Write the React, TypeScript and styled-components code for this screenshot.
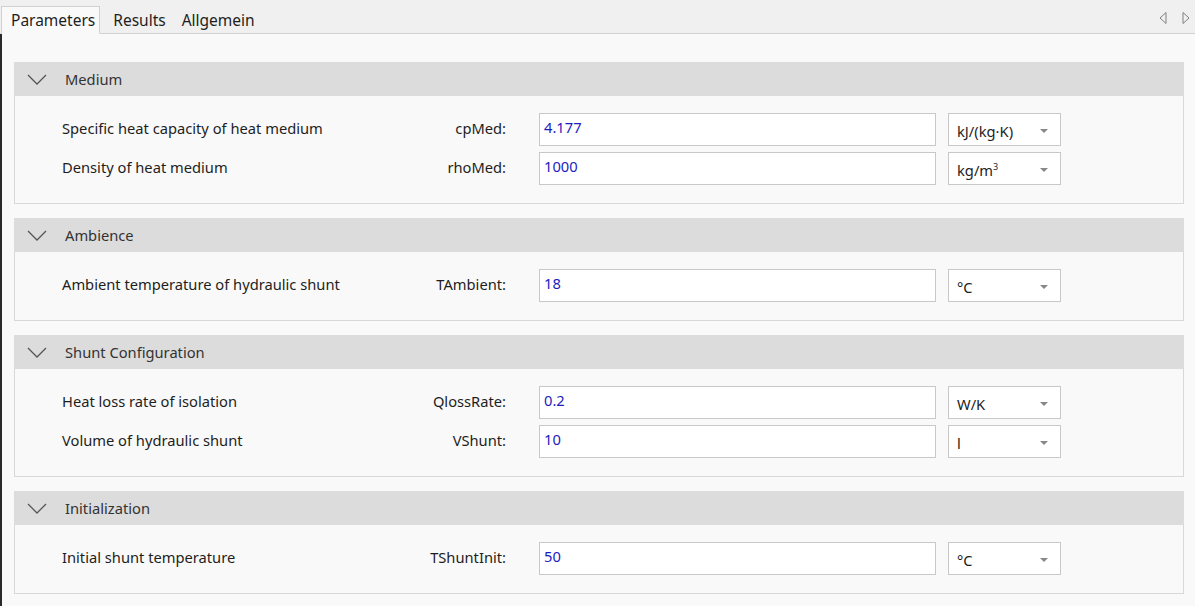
import styled, { createGlobalStyle } from "styled-components";
import { ReactElement } from "react";

interface ParamRow {
    label: string;
    name: string;
    value: string;
    unit: ReactElement | string;
}

interface SectionData {
    title: string;
    rows: ParamRow[];
}

const sections: SectionData[] = [
    {
        title: "Medium",
        rows: [
            { label: "Specific heat capacity of heat medium", name: "cpMed:", value: "4.177", unit: "kJ/(kg·K)" },
            { label: "Density of heat medium", name: "rhoMed:", value: "1000", unit: <>kg/m<sup>3</sup></> },
        ],
    },
    {
        title: "Ambience",
        rows: [
            { label: "Ambient temperature of hydraulic shunt", name: "TAmbient:", value: "18", unit: "°C" },
        ],
    },
    {
        title: "Shunt Configuration",
        rows: [
            { label: "Heat loss rate of isolation", name: "QlossRate:", value: "0.2", unit: "W/K" },
            { label: "Volume of hydraulic shunt", name: "VShunt:", value: "10", unit: "l" },
        ],
    },
    {
        title: "Initialization",
        rows: [
            { label: "Initial shunt temperature", name: "TShuntInit:", value: "50", unit: "°C" },
        ],
    },
];

export default function App(): JSX.Element {
    return (
        <>
            <GlobalStyle />
            <Window>
                <TabBar>
                    <Tab active>Parameters</Tab>
                    <Tab>Results</Tab>
                    <Tab>Allgemein</Tab>
                    <TabSpacer />
                    <ScrollArrows>
                        <svg width="10" height="14" viewBox="0 0 10 14">
                            <path d="M8 1.5 L2 7 L8 12.5 Z" fill="none" stroke="#808080" strokeWidth="1" />
                        </svg>
                        <svg width="10" height="14" viewBox="0 0 10 14">
                            <path d="M2 1.5 L8 7 L2 12.5 Z" fill="none" stroke="#808080" strokeWidth="1" />
                        </svg>
                    </ScrollArrows>
                </TabBar>
                <Content>
                    {sections.map((s) => (
                        <Section key={s.title} section={s} />
                    ))}
                </Content>
            </Window>
        </>
    );
}

/*        ---------------------        COMPONENTES        ---------------------        */

const Section = ({ section }: { section: SectionData }): ReactElement => {
    return (
        <SectionBox>
            <SectionHeader>
                <Chevron width="20" height="11" viewBox="0 0 20 11">
                    <path d="M1 1 L10 10 L19 1" fill="none" stroke="#555" strokeWidth="1.3" />
                </Chevron>
                {section.title}
            </SectionHeader>
            <SectionBody>
                {section.rows.map((r) => (
                    <Row key={r.name}>
                        <Label>{r.label}</Label>
                        <VarName>{r.name}</VarName>
                        <ValueInput>{r.value}</ValueInput>
                        <UnitSelect>
                            <span>{r.unit}</span>
                            <Caret />
                        </UnitSelect>
                    </Row>
                ))}
            </SectionBody>
        </SectionBox>
    );
};

/*        ---------------------        ESTILOS        ---------------------        */

const GlobalStyle = createGlobalStyle`
    body {
        margin: 0;
        background: #f9f9f9;
        font-family: "Noto Sans", "Open Sans", sans-serif;
        color: #1e1e1e;
    }
`;

const Window = styled.div`
    width: 1195px;
    height: 606px;
    display: flex;
    flex-direction: column;
    overflow: hidden;
`;

const TabBar = styled.div`
    height: 33px;
    background: #f0f0f0;
    border-bottom: 1px solid #d0d0d0;
    display: flex;
    align-items: flex-end;
    padding-left: 1px;
`;

const Tab = styled.div<{ active?: boolean }>`
    height: 28px;
    margin-bottom: -1px;
    padding: ${(p) => (p.active ? "0 4px 0 9px" : "0 7px")};
    margin-right: ${(p) => (p.active ? "5px" : "0")};
    display: flex;
    align-items: center;
    font-size: 15.5px;
    color: #1e1e1e;
    background: ${(p) => (p.active ? "#f9f9f9" : "transparent")};
    border: 1px solid ${(p) => (p.active ? "#d0d0d0" : "transparent")};
    border-bottom: 1px solid ${(p) => (p.active ? "#f9f9f9" : "transparent")};
    box-sizing: border-box;
`;

const TabSpacer = styled.div`
    flex: 1;
`;

const ScrollArrows = styled.div`
    display: flex;
    gap: 13px;
    align-self: center;
    padding-right: 4px;
    padding-top: 2px;
`;

const Content = styled.div`
    flex: 1;
    border-left: 2px solid #2a2a2a;
    padding: 28px 11px 0 12px;
    display: flex;
    flex-direction: column;
    gap: 14px;
    background: #f9f9f9;
`;

const SectionBox = styled.div`
    display: flex;
    flex-direction: column;
`;

const SectionHeader = styled.div`
    height: 34px;
    background: #dcdcdc;
    display: flex;
    align-items: center;
    padding-left: 13px;
    font-size: 14.7px;
    color: #333;
`;

const Chevron = styled.svg`
    margin-right: 18px;
`;

const SectionBody = styled.div`
    border: 1px solid #d8d8d8;
    border-top: none;
    padding: 17px 0 18px 47px;
    display: flex;
    flex-direction: column;
    gap: 6px;
`;

const Row = styled.div`
    display: flex;
    align-items: center;
    height: 33px;
`;

const Label = styled.div`
    width: 300px;
    font-size: 14.7px;
    padding-bottom: 3px;
`;

const VarName = styled.div`
    width: 144px;
    text-align: right;
    font-size: 14.7px;
    padding-bottom: 3px;
`;

const ValueInput = styled.div`
    margin-left: 33px;
    width: 397px;
    height: 33px;
    box-sizing: border-box;
    border: 1px solid #c8c8c8;
    background: #fff;
    padding: 3px 0 0 4px;
    font-size: 14.7px;
    color: #1c1cc0;
`;

const UnitSelect = styled.div`
    margin-left: 12px;
    width: 113px;
    height: 33px;
    box-sizing: border-box;
    border: 1px solid #c8c8c8;
    background: #fff;
    display: flex;
    align-items: center;
    justify-content: space-between;
    padding: 2px 12px 0 8px;
    font-size: 14.7px;
    sup {
        font-size: 9px;
        vertical-align: 6px;
    }
`;

const Caret = styled.div`
    width: 0;
    height: 0;
    border-left: 4px solid transparent;
    border-right: 4px solid transparent;
    border-top: 4px solid #888;
`;
